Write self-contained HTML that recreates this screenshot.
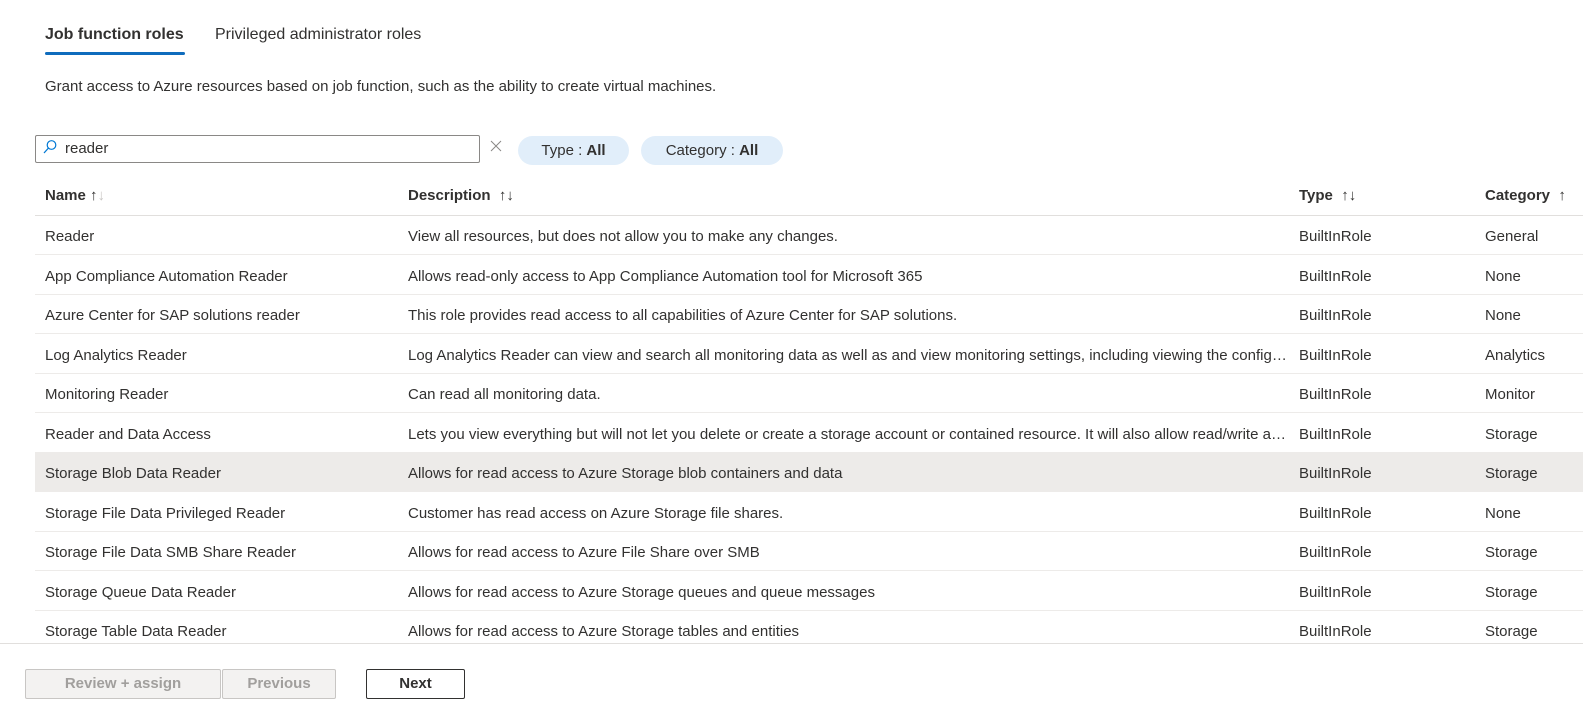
<!DOCTYPE html>
<html><head><style>
*{margin:0;padding:0;box-sizing:border-box}
body{width:1583px;height:713px;background:#fff;font-family:"Liberation Sans",sans-serif;font-size:15px;color:#323130;position:relative;overflow:hidden}
.a{position:absolute;white-space:nowrap}
.row{position:absolute;left:35px;width:1548px;height:39px;border-bottom:1px solid #edebe9}
.row span{position:absolute;top:12px;white-space:nowrap}
.c1{left:10px}.c2{left:373px;width:880px;overflow:hidden;text-overflow:ellipsis}.c3{left:1264px}.c4{left:1450px}
.hd{font-weight:bold;color:#323130}
.btn{position:absolute;top:669px;height:30px;border:1px solid #c8c6c4;border-radius:2px;text-align:center;line-height:28px;font-weight:bold;font-size:15px}
</style></head><body>
<div class="a" style="left:45px;top:26px;font-weight:bold;font-size:16px;color:#323130">Job function roles</div>
<div class="a" style="left:45px;top:52px;width:140px;height:3px;background:#0f6cbd;border-radius:2px"></div>
<div class="a" style="left:215px;top:26px;font-size:16px">Privileged administrator roles</div>
<div class="a" style="left:45px;top:78px">Grant access to Azure resources based on job function, such as the ability to create virtual machines.</div>
<div class="a" style="left:35px;top:135px;width:445px;height:28px;border:1px solid #8a8886;border-radius:2px"></div>
<svg class="a" style="left:42px;top:139px" width="16" height="16" viewBox="0 0 16 16"><circle cx="9.5" cy="6" r="4.3" fill="none" stroke="#0078d4" stroke-width="1.2"/><path d="M6.5 9 L2 14" stroke="#0078d4" stroke-width="1.3"/></svg>
<div class="a" style="left:65px;top:140px">reader</div>
<svg class="a" style="left:490px;top:140px" width="12" height="12"><path d="M1 1L11 11M11 1L1 11" stroke="#8a8886" stroke-width="1"/></svg>
<div class="a" style="left:518px;top:136px;width:111px;height:29px;background:#e1eefa;border-radius:15px;text-align:center;line-height:30px">Type : <b>All</b></div>
<div class="a" style="left:641px;top:136px;width:142px;height:29px;background:#e1eefa;border-radius:15px;text-align:center;line-height:30px">Category : <b>All</b></div>
<div class="row" style="top:176px;height:40px;border-bottom:1px solid #e1dfdd">
<span class="c1 hd" style="top:11px">Name <span style="position:static;font-weight:normal">↑<span style="position:static;color:#c8c6c4">↓</span></span></span>
<span class="c2 hd" style="top:11px">Description &nbsp;<span style="position:static;font-weight:normal">↑↓</span></span>
<span class="c3 hd" style="top:11px">Type &nbsp;<span style="position:static;font-weight:normal">↑↓</span></span>
<span class="c4 hd" style="top:11px">Category &nbsp;<span style="position:static;font-weight:normal">↑</span></span>
</div>
<div class="row" style="top:216px"><span class="c1">Reader</span><span class="c2">View all resources, but does not allow you to make any changes.</span><span class="c3">BuiltInRole</span><span class="c4">General</span></div>
<div class="row" style="top:255.5px"><span class="c1">App Compliance Automation Reader</span><span class="c2">Allows read-only access to App Compliance Automation tool for Microsoft 365</span><span class="c3">BuiltInRole</span><span class="c4">None</span></div>
<div class="row" style="top:295px"><span class="c1">Azure Center for SAP solutions reader</span><span class="c2">This role provides read access to all capabilities of Azure Center for SAP solutions.</span><span class="c3">BuiltInRole</span><span class="c4">None</span></div>
<div class="row" style="top:334.5px"><span class="c1">Log Analytics Reader</span><span class="c2">Log Analytics Reader can view and search all monitoring data as well as and view monitoring settings, including viewing the configuration of Azure diagnostics</span><span class="c3">BuiltInRole</span><span class="c4">Analytics</span></div>
<div class="row" style="top:374px"><span class="c1">Monitoring Reader</span><span class="c2">Can read all monitoring data.</span><span class="c3">BuiltInRole</span><span class="c4">Monitor</span></div>
<div class="row" style="top:413.5px"><span class="c1">Reader and Data Access</span><span class="c2">Lets you view everything but will not let you delete or create a storage account or contained resource. It will also allow read/write access to all data</span><span class="c3">BuiltInRole</span><span class="c4">Storage</span></div>
<div class="row" style="top:453px;background:#edebe9"><span class="c1">Storage Blob Data Reader</span><span class="c2">Allows for read access to Azure Storage blob containers and data</span><span class="c3">BuiltInRole</span><span class="c4">Storage</span></div>
<div class="row" style="top:492.5px"><span class="c1">Storage File Data Privileged Reader</span><span class="c2">Customer has read access on Azure Storage file shares.</span><span class="c3">BuiltInRole</span><span class="c4">None</span></div>
<div class="row" style="top:532px"><span class="c1">Storage File Data SMB Share Reader</span><span class="c2">Allows for read access to Azure File Share over SMB</span><span class="c3">BuiltInRole</span><span class="c4">Storage</span></div>
<div class="row" style="top:571.5px"><span class="c1">Storage Queue Data Reader</span><span class="c2">Allows for read access to Azure Storage queues and queue messages</span><span class="c3">BuiltInRole</span><span class="c4">Storage</span></div>
<div class="row" style="top:611px;height:32px;border:none;overflow:hidden"><span class="c1">Storage Table Data Reader</span><span class="c2">Allows for read access to Azure Storage tables and entities</span><span class="c3">BuiltInRole</span><span class="c4">Storage</span></div>
<div class="a" style="left:0;top:643px;width:1583px;height:1px;background:#e1dfdd"></div>
<div class="btn" style="left:25px;width:196px;background:#f3f2f1;color:#a19f9d">Review + assign</div>
<div class="btn" style="left:222px;width:114px;background:#f3f2f1;color:#a19f9d">Previous</div>
<div class="btn" style="left:366px;width:99px;background:#fff;border-color:#323130;color:#323130">Next</div>
</body></html>
